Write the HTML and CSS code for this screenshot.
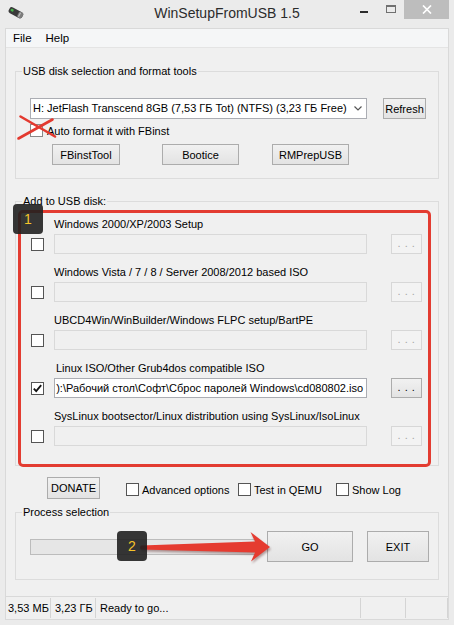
FILE: index.html
```html
<!DOCTYPE html>
<html lang="en">
<head>
<meta charset="utf-8">
<title>WinSetupFromUSB 1.5</title>
<link rel="stylesheet" href="styles.css">
</head>
<body>
<div class="window">
  <header class="titlebar">
    <div class="tb-left">
      <svg class="app-icon" viewBox="0 0 16 13" width="16" height="13">
        <g transform="rotate(28 8 6.5)">
          <rect x="0.5" y="3.5" width="15" height="6.5" rx="2.5" fill="#3a3a3a"/>
          <rect x="10.5" y="3.5" width="5" height="6.5" rx="2" fill="#7d7d7d"/>
          <rect x="11.5" y="4.5" width="1.2" height="4.5" fill="#bdbdbd"/>
          <rect x="2" y="5" width="3" height="2.6" rx="1" fill="#47b04b"/>
        </g>
      </svg>
    </div>
    <div class="title">WinSetupFromUSB 1.5</div>
    <div class="controls">
      <span class="ctl ctl-min"><span class="dash"></span></span>
      <span class="ctl ctl-max"><span class="maxbox"></span></span>
      <span class="ctl ctl-close">
        <svg width="10" height="9" viewBox="0 0 10 9"><path d="M1 0.5 L9 8.5 M9 0.5 L1 8.5" stroke="#fff" stroke-width="1.7"/></svg>
      </span>
    </div>
  </header>

  <div class="client">
    <nav class="menubar"><span>File</span><span>Help</span></nav>

    <div class="content">
      <fieldset class="group">
        <legend>USB disk selection and format tools</legend>
        <div class="group-body usb-body">
          <div class="disk-row">
            <div class="combo">
              <span>H: JetFlash Transcend 8GB (7,53 ГБ Tot) (NTFS) (3,23 ГБ Free)</span>
              <svg class="chev" width="8" height="5" viewBox="0 0 8 5"><path d="M0.5 0.5 L4 4 L7.5 0.5" fill="none" stroke="#555" stroke-width="1.2"/></svg>
            </div>
            <button class="btn refresh">Refresh</button>
          </div>
          <label class="check-row"><span class="cb cb-light"></span><span>Auto format it with FBinst</span></label>
          <div class="tools">
            <button class="btn fbinst">FBinstTool</button>
            <button class="btn bootice">Bootice</button>
            <button class="btn rmprep">RMPrepUSB</button>
          </div>
          <svg class="cross" width="42" height="28" viewBox="0 0 42 28">
            <path d="M4.5 2.5 L39 22.5 M36.5 5.5 L2.5 24.5" stroke="#e3392f" stroke-width="2.6" stroke-linecap="round" fill="none"/>
          </svg>
        </div>
      </fieldset>

      <fieldset class="group group-add">
        <legend>Add to USB disk:</legend>
        <div class="group-body add-body">
          <div class="src-list">
            <div class="src-row">
              <span class="src-label">Windows 2000/XP/2003 Setup</span>
              <span class="cb"></span>
              <span class="field disabled"></span>
              <span class="browse disabled">. . .</span>
            </div>
            <div class="src-row">
              <span class="src-label">Windows Vista / 7 / 8 / Server 2008/2012 based ISO</span>
              <span class="cb"></span>
              <span class="field disabled"></span>
              <span class="browse disabled">. . .</span>
            </div>
            <div class="src-row">
              <span class="src-label">UBCD4Win/WinBuilder/Windows FLPC setup/BartPE</span>
              <span class="cb"></span>
              <span class="field disabled"></span>
              <span class="browse disabled">. . .</span>
            </div>
            <div class="src-row">
              <span class="src-label indent">Linux ISO/Other Grub4dos compatible ISO</span>
              <span class="cb checked"><svg width="11" height="11" viewBox="0 0 11 11"><path d="M1.8 5.6 L4.2 8.2 L9.2 2.2" fill="none" stroke="#111" stroke-width="1.8"/></svg></span>
              <span class="field enabled"><span class="field-text">):\Рабочий стол\Софт\Сброс паролей Windows\cd080802.iso</span></span>
              <span class="browse enabled">. . .</span>
            </div>
            <div class="src-row">
              <span class="src-label">SysLinux bootsector/Linux distribution using SysLinux/IsoLinux</span>
              <span class="cb"></span>
              <span class="field disabled"></span>
              <span class="browse disabled">. . .</span>
            </div>
          </div>
          <div class="red-frame"></div>
          <div class="badge badge-1">1</div>
        </div>
      </fieldset>

      <div class="options">
        <button class="btn donate">DONATE</button>
        <label class="opt"><span class="cb"></span><span>Advanced options</span></label>
        <label class="opt"><span class="cb"></span><span>Test in QEMU</span></label>
        <label class="opt"><span class="cb"></span><span>Show Log</span></label>
      </div>

      <fieldset class="group group-process">
        <legend>Process selection</legend>
        <div class="group-body process-body">
          <div class="progress"></div>
          <button class="btn go">GO</button>
          <button class="btn exit">EXIT</button>
          <svg class="arrow" width="140" height="40" viewBox="0 0 140 40">
            <path d="M5 17.6 L119 13.6 L114.5 4 L134 19 L115 33.5 L119 24.4 L5 21.4 Q3 19.5 5 17.6 Z" fill="#e53b30"/>
          </svg>
          <div class="badge badge-2">2</div>
        </div>
      </fieldset>
    </div>

    <footer class="statusbar">
      <span class="panel p1">3,53 МБ</span>
      <span class="panel p2">3,23 ГБ</span>
      <span class="panel p3">Ready to go...</span>
      <span class="panel p4"></span>
      <span class="panel p5"></span>
    </footer>
  </div>
</div>
</body>
</html>
```

FILE: styles.css
```css
* { box-sizing: border-box; }
html, body { margin: 0; padding: 0; }
body {
  width: 454px;
  height: 625px;
  overflow: hidden;
  background: #ebebeb;
  font-family: "Liberation Sans", Arial, sans-serif;
  font-size: 11px;
  color: #000;
}
.window {
  width: 454px;
  height: 625px;
  display: flex;
  flex-direction: column;
}

/* Title bar */
.titlebar {
  height: 28px;
  flex: none;
  display: grid;
  grid-template-columns: 1fr auto 1fr;
  align-items: start;
  padding: 0 5px;
}
.tb-left { display: flex; }
.app-icon { margin: 6px 0 0 3px; }
.title {
  font-size: 14px;
  line-height: 26px;
  color: #2b2b2b;
  white-space: nowrap;
}
.controls { justify-self: end; display: flex; }
.ctl { height: 20px; display: flex; }
.ctl-min { width: 26px; padding-left: 8px; }
.ctl-max { width: 26px; justify-content: center; }
.ctl-close {
  width: 45px;
  height: 19px;
  background: #bdbdbd;
  justify-content: center;
  align-items: center;
}
.dash { width: 8px; height: 2px; margin-top: 11px; background: #2b2b2b; }
.maxbox {
  width: 10px;
  height: 8px;
  margin-top: 5px;
  border: 1px solid #707070;
  border-top-width: 2px;
}

/* Client area */
.client {
  margin: 0 5px 5px;
  height: 592px;
  border: 1px solid #d9d9d9;
  background: #f0f0f0;
  display: flex;
  flex-direction: column;
}
.menubar {
  height: 19px;
  flex: none;
  background: #f5f6f7;
  border-bottom: 1px solid #e4e4e4;
  display: flex;
  gap: 14px;
  padding-left: 7px;
  line-height: 18px;
  font-size: 11.5px;
}
.content { padding: 0 9px; flex: 1; }

/* Group boxes */
.group {
  margin: 15px 0 0;
  padding: 0;
  border: 1px solid #dcdcdc;
  min-width: 0;
}
.group legend {
  margin-left: 6px;
  padding: 0 1px;
  line-height: 16px;
}
.group-add { margin-top: 14px; }
.group-process { margin-top: 5px; }
.group-body { position: relative; }

/* Controls */
.btn {
  font: inherit;
  color: #000;
  height: 21px;
  padding: 0;
  border: 1px solid #acacac;
  background: linear-gradient(#f1f1f1, #e3e3e3);
}
.cb {
  width: 13px;
  height: 13px;
  flex: none;
  border: 1px solid #555;
  background: #fff;
  display: flex;
  align-items: center;
  justify-content: center;
}
.cb-light { border-color: #8a8a8a; }

/* USB group */
.usb-body { padding: 18px 0 13px 14px; }
.disk-row { display: flex; align-items: center; gap: 16px; }
.combo {
  width: 337px;
  height: 21px;
  border: 1px solid #abadb3;
  background: #fff;
  display: flex;
  align-items: center;
  justify-content: space-between;
  padding: 0 4px 0 2px;
  white-space: nowrap;
}
.refresh { width: 43px; margin-top: 1px; }
.check-row {
  margin-top: 5px;
  height: 13px;
  display: flex;
  align-items: center;
  gap: 4px;
}
.tools { margin-top: 7px; padding-left: 22px; display: flex; }
.fbinst { width: 68px; }
.bootice { width: 77px; margin-left: 42px; }
.rmprep { width: 77px; margin-left: 33px; }
.cross { position: absolute; left: 0; top: 35px; }

/* Add group */
.add-body { padding: 7px 0 19px 15px; }
.src-list { display: flex; flex-direction: column; gap: 10px; }
.src-row {
  display: grid;
  grid-template-columns: 23px 337px 31px;
  grid-template-rows: 16px 20px;
  row-gap: 2px;
}
.src-label {
  grid-column: 2;
  grid-row: 1;
  line-height: 16px;
  white-space: nowrap;
}
.src-label.indent { padding-left: 2px; }
.src-row .cb { grid-column: 1; grid-row: 2; align-self: center; margin-top: 1px; }
.field {
  grid-column: 2;
  grid-row: 2;
  width: 313px;
  height: 20px;
  display: flex;
  align-items: center;
  justify-content: flex-end;
  overflow: hidden;
  white-space: nowrap;
}
.field.disabled { border: 1px solid #d9d9d9; background: #f0f0f0; }
.field.enabled { border: 1px solid #abadb3; background: #fff; padding-right: 3px; }
.browse {
  grid-column: 3;
  grid-row: 2;
  height: 20px;
  display: flex;
  align-items: flex-end;
  justify-content: center;
  line-height: 14px;
  padding-bottom: 3px;
  letter-spacing: 0.5px;
}
.browse.disabled { border: 1px solid #d7d7d7; background: #f3f3f3; color: #a6a6a6; }
.browse.enabled { border: 1px solid #acacac; background: linear-gradient(#f1f1f1, #e3e3e3); color: #000; }

.red-frame {
  position: absolute;
  left: 2px;
  top: 1px;
  width: 413px;
  height: 257px;
  border: 3px solid #e33c31;
  border-radius: 5px;
}
.badge {
  position: absolute;
  width: 30px;
  height: 30px;
  border-radius: 4px;
  background: rgba(32, 32, 32, 0.9);
  color: #f6c42a;
  font-size: 14px;
  line-height: 30px;
  text-align: center;
}
.badge-1 { left: -3px; top: -5px; }
.badge-2 { left: 101px; top: 11px; }

/* Options row */
.options {
  margin-top: 11px;
  padding-left: 32px;
  display: grid;
  grid-template-columns: 79px 112px 98px 1fr;
  align-items: center;
}
.donate { width: 53px; height: 22px; }
.opt { display: flex; align-items: center; gap: 3px; margin-top: 3px; }

/* Process group */
.process-body {
  padding: 11px 0 17px 14px;
  display: flex;
  align-items: center;
}
.progress {
  width: 226px;
  height: 16px;
  border: 1px solid #bcbcbc;
  background: #e6e6e6;
}
.go { width: 86px; height: 31px; margin-left: 11px; }
.exit { width: 62px; height: 31px; margin-left: 14px; }
.arrow {
  position: absolute;
  left: 120px;
  top: 8px;
  filter: drop-shadow(1px 2px 1px rgba(60, 0, 0, 0.35));
}

/* Status bar */
.statusbar {
  margin-top: auto;
  height: 23px;
  flex: none;
  border-top: 1px solid #d9d9d9;
  display: grid;
  grid-template-columns: 45px 45px 265px 45px 42px;
}
.panel {
  margin: 1px 0;
  border-right: 1px solid #d4d4d4;
  line-height: 20px;
  white-space: nowrap;
  overflow: hidden;
}
.p1 { padding-left: 2px; }
.p2 { padding-left: 4px; }
.p3 { padding-left: 4px; }
```
